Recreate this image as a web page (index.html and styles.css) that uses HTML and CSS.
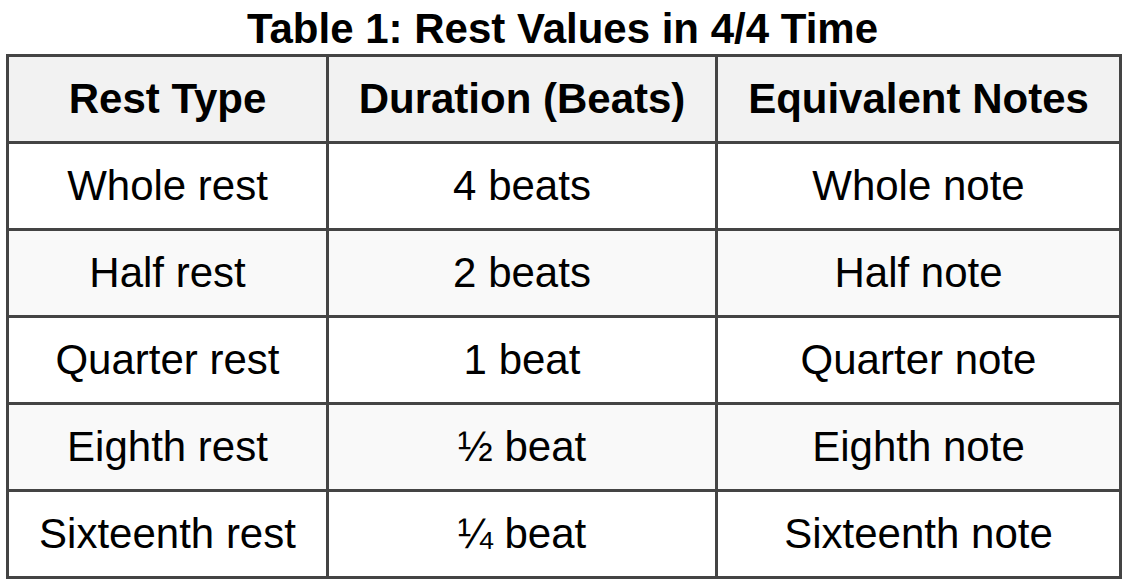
FILE: index.html
```html
<!DOCTYPE html>
<html lang="en">
<head>
<meta charset="utf-8">
<title>Rest Values in 4/4 Time</title>
<link rel="stylesheet" href="styles.css">
</head>
<body>
<div class="wrap">
  <h1 class="title">Table 1: Rest Values in 4/4 Time</h1>
  <table class="rests">
    <colgroup>
      <col class="c1">
      <col class="c2">
      <col class="c3">
    </colgroup>
    <thead>
      <tr><th>Rest Type</th><th>Duration (Beats)</th><th>Equivalent Notes</th></tr>
    </thead>
    <tbody>
      <tr><td>Whole rest</td><td>4 beats</td><td>Whole note</td></tr>
      <tr><td>Half rest</td><td>2 beats</td><td>Half note</td></tr>
      <tr><td>Quarter rest</td><td>1 beat</td><td>Quarter note</td></tr>
      <tr><td>Eighth rest</td><td>½ beat</td><td>Eighth note</td></tr>
      <tr><td>Sixteenth rest</td><td>¼ beat</td><td>Sixteenth note</td></tr>
    </tbody>
  </table>
</div>
</body>
</html>
```
FILE: styles.css
```css
html, body {
  margin: 0;
  padding: 0;
  background: #ffffff;
}
body {
  font-family: "Liberation Sans", Arial, sans-serif;
  color: #000000;
}
.wrap {
  padding-left: 6px;
  width: 1113px;
}
.title {
  margin: 0 0 2px 0;
  padding-top: 6px;
  font-size: 42px;
  line-height: 46px;
  font-weight: bold;
  text-align: center;
}
.rests {
  border-collapse: collapse;
  table-layout: fixed;
  width: 1113px;
}
.c1 { width: 320px; }
.c2 { width: 389px; }
.c3 { width: 404px; }
.rests th,
.rests td {
  border: 3px solid #444444;
  text-align: center;
  vertical-align: middle;
  padding: 0;
}
.rests tr {
  height: 87px;
}
.rests th {
  background: #f2f2f2;
  font-size: 42px;
  font-weight: bold;
}
.rests td {
  font-size: 42px;
}
.rests tbody tr:nth-child(even) td {
  background: #f9f9f9;
}
```
